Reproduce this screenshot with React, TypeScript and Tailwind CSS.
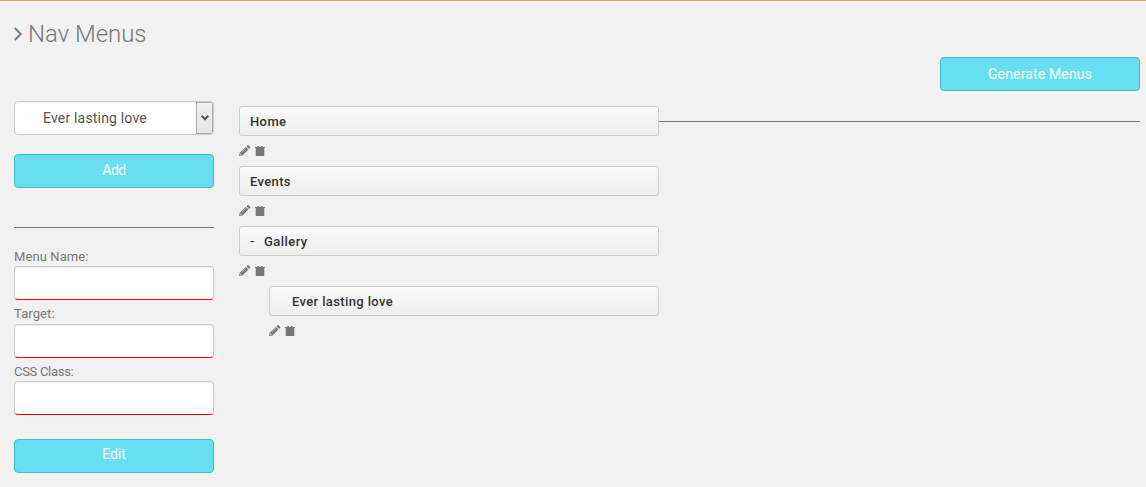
import type { ReactNode } from "react";

function PencilIcon() {
  return (
    <svg width="12" height="11" viewBox="0 0 12 11" fill="#777">
      <path d="M7.5 1.3 8.5.3Q9-.1 9.5.3L11.2 1.8Q11.6 2.3 11.2 2.8L10 4ZM6.8 1.9 9.4 4.6 3.5 10.4 0 11 .7 7.7ZM1.4 8.4 1.1 9.5 1.6 9.9 2.7 9.6ZM6.7 3.3 2.6 7.2 2.9 7.5 7 3.6Z" fillRule="evenodd" />
    </svg>
  );
}

function TrashIcon() {
  return (
    <svg width="10" height="10" viewBox="0 0 10 10" fill="#777">
      <path d="M0 1H2.2L2.6 0H3.6L3.9.7H6.1L6.4 0H7.4L7.8 1H10V2H9.3V9.3Q9.3 10 8.6 10H1.4Q.7 10 .7 9.3V2H0Z" />
    </svg>
  );
}

function ActionButton({ children, textClass }: { children: ReactNode; textClass: string }) {
  return (
    <button className={"h-[34px] w-[200px] rounded-[4px] border border-[#43bdb9] bg-[#67dff0] text-center text-[14px] font-normal text-white " + textClass}>
      {children}
    </button>
  );
}

function Field({ label, labelClass }: { label: string; labelClass: string }) {
  return (
    <label className="flex h-[57.5px] flex-col">
      <span className={"h-5 whitespace-nowrap text-[13px] font-normal " + labelClass}>{label}</span>
      <input className="h-[34px] w-full rounded-[4px] border border-[#ccc] border-b-[#f00] bg-white px-3 shadow-[inset_0_1px_1px_rgba(0,0,0,0.075)] outline-none" />
    </label>
  );
}

function MenuItem({ children, line }: { children: ReactNode; line?: boolean }) {
  return (
    <div className="h-[60px]">
      <div className="flex items-center">
        <div className={(line ? "w-[420px]" : "w-full max-w-[420px]") + " flex h-[30px] shrink-0 items-center rounded-[3px] border border-[#ccc] bg-linear-to-b from-[#fafafa] to-[#eee] px-[10px] pt-px text-[13px] font-medium text-[#333]"}>
          {children}
        </div>
        {line && <hr className="flex-1 border-[#777]" />}
      </div>
      <div className="flex items-center gap-1 pt-[9px]">
        <PencilIcon />
        <TrashIcon />
      </div>
    </div>
  );
}

export default function App() {
  return (
    <main className="h-[487px] w-[1146px] overflow-hidden border-t border-[#cbae5d] bg-[#f1f1f1] pl-[14px] pr-[6px] font-['Roboto',sans-serif] font-light text-[#777]">
      <h1 className="flex h-14 items-center gap-[6px] pt-[9px] text-[24px] font-light leading-8">
        <svg width="8" height="14" viewBox="0 0 8 14" fill="none" stroke="#777" strokeWidth="1.8">
          <path d="M.8 1 6.8 7 .8 13" />
        </svg>
        <span className="tracking-[-0.05px]">Nav Menus</span>
      </h1>
      <div className="flex h-11 justify-end">
        <ActionButton textClass="tracking-[0.15px]">Generate Menus</ActionButton>
      </div>
      <div className="flex gap-[25px]">
        <aside className="w-[200px] shrink-0">
          <div className="flex h-[34px] overflow-hidden rounded-[4px] border border-[#ccc] bg-white text-[14px] font-normal text-[#555] shadow-[inset_0_1px_1px_rgba(0,0,0,0.075)]">
            <span className="flex-1 pl-7 leading-[32px] tracking-[0.18px]">Ever lasting love</span>
            <span className="flex w-[17px] items-center justify-center border border-[#aaa] bg-linear-to-b from-[#f0f0f0] to-[#e5e5e5]">
              <svg width="8" height="6" viewBox="0 0 8 6" fill="none" stroke="#555" strokeWidth="2">
                <path d="M.7.8 4 4.3 7.3.8" />
              </svg>
            </span>
          </div>
          <div className="mt-[19px] h-[34px]"><ActionButton textClass="pb-[2px] tracking-[-0.5px]">Add</ActionButton></div>
          <hr className="mb-[18px] mt-[39px] border-[#777]" />
          <Field label="Menu Name:" labelClass="leading-[21px] tracking-[0.1px]" />
          <Field label="Target:" labelClass="leading-[19px] tracking-[0.1px]" />
          <Field label="CSS Class:" labelClass="leading-[21px] tracking-[-0.3px]" />
          <div className="mt-[20px] h-[34px]"><ActionButton textClass="pb-[2px]">Edit</ActionButton></div>
        </aside>
        <section className="min-w-0 flex-1 pt-[5px]">
          <MenuItem line><span className="tracking-[0.4px]">Home</span></MenuItem>
          <MenuItem><span className="tracking-[0.35px]">Events</span></MenuItem>
          <MenuItem>
            <span className="w-[14px]">-</span><span className="tracking-[0.45px]">Gallery</span>
          </MenuItem>
          <div className="w-[420px] pl-[30px]">
            <MenuItem><span className="pl-3 tracking-[0.37px]">Ever lasting love</span></MenuItem>
          </div>
        </section>
      </div>
    </main>
  );
}
